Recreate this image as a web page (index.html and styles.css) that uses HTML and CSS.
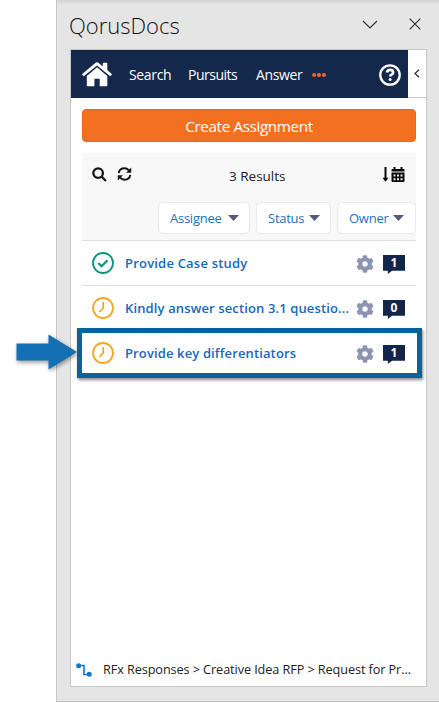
FILE: index.html
```html
<!DOCTYPE html>
<html lang="en">
<head>
<meta charset="utf-8">
<title>QorusDocs</title>
<link rel="stylesheet" href="styles.css">
</head>
<body>
<svg class="defs" width="0" height="0">
  <symbol id="gear" viewBox="0 0 512 512"><path d="M487.400 315.700l-42.600-24.600c4.300-23.200 4.300-47 0-70.200l42.600-24.600c4.900-2.800 7.100-8.600 5.500-14-11.100-35.600-30-67.800-54.700-94.600-3.800-4.100-10-5.100-14.800-2.300L380.800 110c-17.900-15.400-38.500-27.300-60.800-35.100V25.800c0-5.600-3.900-10.500-9.400-11.700-36.700-8.200-74.300-7.800-109.200 0-5.500 1.200-9.400 6.100-9.400 11.700V75c-22.200 7.900-42.800 19.800-60.800 35.100L88.700 85.500c-4.900-2.800-11-1.900-14.800 2.300-24.700 26.700-43.600 58.900-54.700 94.600-1.700 5.400.6 11.200 5.500 14L67.300 221c-4.300 23.200-4.300 47 0 70.200l-42.600 24.600c-4.900 2.800-7.100 8.600-5.500 14 11.100 35.600 30 67.800 54.700 94.600 3.800 4.100 10 5.100 14.800 2.300l42.600-24.600c17.900 15.400 38.500 27.300 60.800 35.100v49.200c0 5.600 3.900 10.500 9.400 11.700 36.700 8.200 74.300 7.800 109.200 0 5.500-1.200 9.400-6.100 9.400-11.700v-49.200c22.200-7.900 42.800-19.800 60.800-35.100l42.600 24.600c4.900 2.800 11 1.900 14.800-2.300 24.700-26.700 43.600-58.900 54.700-94.600 1.500-5.500-.7-11.300-5.600-14.100zM256 336c-44.100 0-80-35.900-80-80s35.900-80 80-80 80 35.900 80 80-35.900 80-80 80z"/></symbol>
  <symbol id="clock" viewBox="0 0 22 22"><circle cx="11" cy="11" r="10"/><path d="M11.200 5v6l-3.700 4"/></symbol>
</svg>
<div class="pane">
  <header class="titlebar">
    <h1>QorusDocs</h1>
    <svg class="chev" viewBox="0 0 16 9"><path d="M1 1l7 7 7-7"/></svg>
    <svg class="close" viewBox="0 0 12 12"><path d="M.7.700l10.600 10.600M11.300.7L.7 11.300"/></svg>
  </header>
  <main class="content">
    <div class="top">
      <nav>
        <svg class="home" viewBox="0 0 30 25"><path d="M15 5.300L4.800 14v9.200q0 1 1 1h6.600v-7.400h5.300v7.400h6.600q1 0 1-1V14z"/><path d="M13.600.7q1.400-1.100 2.800 0l4.400 3.700V1.600q0-.9.900-.9h2.700q.9 0 .9.900v6.500l4.200 3.600q.6.600.1 1.200l-.8.900q-.6.500-1.200 0L15 3.400 2.400 13.800q-.6.500-1.200 0l-.8-.9q-.5-.6.100-1.200z"/></svg>
        <a class="search">Search</a><a class="pursuits">Pursuits</a><a class="answer">Answer</a>
        <svg class="dots" viewBox="0 0 14 4"><circle cx="2.100" cy="2" r="2"/><circle cx="7" cy="2" r="2"/><circle cx="11.900" cy="2" r="2"/></svg>
        <svg class="help" viewBox="0 0 22 22"><circle cx="11" cy="11" r="9.700"/><path d="M7.900 8.600q.5-2.700 3.200-2.700 3 0 3 2.500 0 1.300-1.600 2.200-1.300.7-1.300 1.900"/><circle class="point" cx="11.100" cy="15.600" r="1.500"/></svg>
      </nav>
      <div class="collapse"><svg viewBox="0 0 6 9"><path d="M5 .8L1 4.500l4 3.700"/></svg></div>
    </div>
    <button class="create"><span>Create Assignment</span></button>
    <section class="tools">
      <div class="results">
        <svg class="mag" viewBox="0 0 14 14"><circle cx="5.700" cy="5.700" r="4.500"/><path d="M9 9l4 4"/></svg>
        <svg class="refresh" viewBox="0 0 14 14"><path class="line" d="M1.200 6.200C1.700 2.700 4 1.300 7 1.300q2.600 0 4.500 2M12.800 7.800c-.5 3.500-2.800 4.900-5.800 4.900q-2.600 0-4.500-2"/><path d="M13.700.5v5.200H8.500zM.3 13.500V8.300h5.200z"/></svg>
        <span class="count">3 Results</span>
        <svg class="sort" viewBox="0 0 22 15"><path d="M2 0h2v10.700h2L3 14.700 0 10.700h2zM11 0h2v2h5V0h2v2h1q1 0 1 1v1.500H9V3q0-1 1-1h1zM9 5.500h13V14q0 1-1 1H10q-1 0-1-1z"/><path class="cells" d="M11 7.500h2v2h-2zm3.500 0h2v2h-2zm3.500 0h2v2h-2zM11 11.200h2v2h-2zm3.500 0h2v2h-2zm3.500 0h2v2h-2z"/></svg>
      </div>
      <div class="filters">
        <button class="assignee"><span>Assignee</span><i></i></button>
        <button class="status"><span>Status</span><i></i></button>
        <button class="owner"><span>Owner</span><i></i></button>
      </div>
    </section>
    <ul class="list">
      <li><svg class="state done" viewBox="0 0 22 22"><circle cx="11" cy="11" r="10"/><path d="M6.300 11l3.300 3.200 5.900-6"/></svg><a class="n1">Provide Case study</a><svg class="gear"><use href="#gear"/></svg><span class="badge"><b>1</b></span></li>
      <li><svg class="state"><use href="#clock"/></svg><a class="n2">Kindly answer section 3.1 questio...</a><svg class="gear"><use href="#gear"/></svg><span class="badge"><b>0</b></span></li>
      <li class="selected"><svg class="state"><use href="#clock"/></svg><a class="n3">Provide key differentiators</a><svg class="gear"><use href="#gear"/></svg><span class="badge"><b>1</b></span></li>
    </ul>
    <footer>
      <svg viewBox="0 0 16 14"><path d="M2.500 2.500h5.500v9h5"/><circle cx="2.600" cy="2.800" r="2.500"/><circle cx="13.200" cy="11.200" r="2.500"/></svg>
      <span>RFx Responses &gt; Creative Idea RFP &gt; Request for Pr...</span>
    </footer>
  </main>
</div>
<svg class="arrow" viewBox="0 0 62 36"><path d="M.5 9.500h32V.5L61 18 32.500 35.500v-9H.5z"/></svg>
</body>
</html>
```
FILE: styles.css
```css
* { box-sizing: border-box; }
body {
  margin: 0;
  width: 439px;
  height: 702px;
  padding-left: 56px;
  background: #fff;
  overflow: hidden;
  position: relative;
  font-family: "Open Sans", "Noto Sans", sans-serif;
}
svg { display: block; flex: none; }
.defs { position: absolute; }
button { font: inherit; margin: 0; padding: 0; }
a, span { white-space: nowrap; }

.pane {
  height: 702px;
  padding: 0 12px 14px 13px;
  background: linear-gradient(#d3d3d3, #e5e5e5 5px);
  border-left: 1px solid #c6c6c6;
  border-bottom: 1px solid #c4c4c4;
  display: flex;
  flex-direction: column;
}
.titlebar { height: 49px; display: flex; flex: none; }
h1 {
  margin: 8px 0 0 -1px;
  width: 293px;
  font-size: 22px;
  line-height: 34px;
  font-weight: 300;
  color: #111;
}
.chev { width: 16px; height: 9px; margin: 20px 0 0; }
.close { width: 12px; height: 12px; margin: 18px 0 0 31px; }
.chev path, .close path { fill: none; stroke: #333; stroke-width: 1.2; }

.content {
  flex: 1;
  min-height: 0;
  border: 1px solid #c8c8c8;
  background: #fff;
  display: flex;
  flex-direction: column;
}
.top { display: flex; height: 48px; flex: none; }
nav {
  width: 337px;
  flex: none;
  background: #14284b;
  color: #fff;
  display: flex;
  align-items: center;
  padding-left: 11px;
  font-size: 14px;
  letter-spacing: -.35px;
}
nav a { flex: none; line-height: 20px; padding-top: 2px; }
.home { width: 30px; height: 25px; fill: #fff; margin-right: 17px; }
.search { width: 59px; }
.pursuits { width: 68px; letter-spacing: -.5px; }
.answer { width: 56px; }
.dots { width: 14px; height: 4px; fill: #f26a2a; margin-top: 2px; }
.help { width: 22px; height: 22px; margin: 1px 0 0 53px; fill: none; stroke: #fff; stroke-width: 2.3; }
.help path { stroke-width: 2.7; }
.help .point { fill: #fff; stroke: none; }
.collapse {
  flex: 1;
  border-bottom: 1px solid #c8c8c8;
  display: flex;
  justify-content: center;
  align-items: center;
}
.collapse svg { width: 6px; height: 9px; fill: none; stroke: #333; stroke-width: 1.3; }

.create {
  flex: none;
  height: 33px;
  margin: 11px 10px 11px 11px;
  border: 1px solid #ef6415;
  border-radius: 4px;
  background: #f37021;
  color: #fff;
  font-size: 15.3px;
  letter-spacing: -.4px;
  padding-top: 1px;
}
.tools { height: 87px; flex: none; margin: 0 10px 0 11px; background: #f8f8f8; }
.results { height: 49px; display: flex; padding-left: 10px; }
.mag { width: 15px; height: 15px; margin: 14px 0 0; fill: none; stroke: #151515; stroke-width: 2.1; }
.refresh { width: 15px; height: 14px; margin: 14px 0 0 10px; fill: #151515; }
.refresh .line { fill: none; stroke: #151515; stroke-width: 1.9; }
.count { width: 153px; margin: 13px 0 0 97px; font-size: 13.5px; line-height: 20px; color: #222; }
.sort { width: 23px; height: 15px; margin-top: 14px; fill: #080808; }
.sort .cells { fill: #eee; }
.filters { display: flex; justify-content: flex-end; gap: 6px; }
.filters button {
  height: 32px;
  border: 1px solid #e9e9ea;
  border-radius: 5px;
  background: #fff;
  color: #1971c2;
  font-size: 13px;
  letter-spacing: -.25px;
  text-align: left;
  display: flex;
  align-items: center;
  padding-left: 11px;
}
.filters i {
  width: 11px;
  height: 6px;
  background: #56597b;
  clip-path: polygon(0 0, 100% 0, 50% 100%);
}
.filters .assignee { width: 92px; }
.filters .status { width: 75px; }
.filters .owner { width: 79px; }
.filters span { flex: none; width: 58px; }
.filters .status span { width: 41px; }
.filters .owner span { width: 44px; }

.list { list-style: none; margin: 0 10px 0 11px; padding: 0; }
li {
  height: 45px;
  border-top: 1px solid #dfdfdf;
  display: flex;
  align-items: center;
  padding-left: 10px;
}
li.selected {
  height: 50px;
  margin: -2px -6px 0 -5px;
  border: 5px solid #05659a;
  box-shadow: 1px 2px 3px #0007;
}
.state { width: 22px; height: 22px; fill: none; stroke: #f5a623; stroke-width: 1.8; }
.done { stroke: #0b967a; }
.done path { stroke-width: 2.2; }
li a { width: 231px; margin-left: 11px; font-size: 13px; letter-spacing: .13px; line-height: 20px; font-weight: 600; color: #1767bd; }
.n1 { letter-spacing: .2px; }
.gear { width: 18px; height: 18px; fill: #8d94b1; margin-top: 2px; }
.badge { flex: none; width: 22px; height: 19px; margin: 3px 0 0 9px; background: #12264b; clip-path: polygon(0 0, 100% 0, 100% 83%, 41% 83%, 22% 100%, 22% 83%, 0 83%); color: #fff; text-align: center; }
.badge b { display: block; font-size: 12px; line-height: 16px; }
footer { margin-top: auto; height: 34px; display: flex; padding-left: 5px; }
footer svg { width: 16px; height: 14px; margin-top: 11px; fill: #0f78d4; }
footer path { fill: none; stroke: #0f78d4; stroke-width: 1.6; }
footer span { margin-left: 11px; font-size: 12.7px; letter-spacing: -.09px; line-height: 34px; color: #222; }
.arrow { position: absolute; left: 16px; top: 334px; width: 62px; height: 36px; fill: #1370b3; filter: drop-shadow(1px 2px 2px #0006); overflow: visible; }
```
